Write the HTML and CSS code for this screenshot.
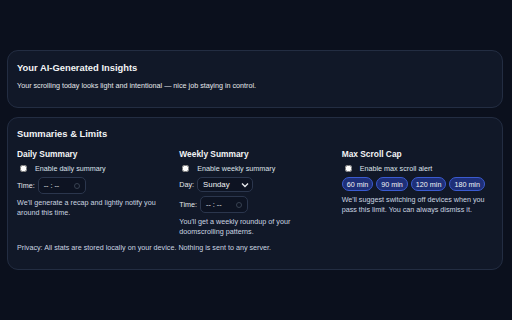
FILE: index.html
```html
<!doctype html>
<html>
<head>
    <meta charset="utf-8">
    <title>Insights</title>
    <link rel="stylesheet" href="styles.css">
</head>
<body>
    <main class="page">
        <section class="card insights">
            <h2>Your AI-Generated Insights</h2>
            <p class="insight-text">Your scrolling today looks light and intentional — nice job staying in control.</p>
        </section>

        <section class="card limits">
            <h2>Summaries &amp; Limits</h2>
            <div class="columns">
                <div class="col">
                    <h3>Daily Summary</h3>
                    <label class="check"><input type="checkbox"> Enable daily summary</label>
                    <div class="field">
                        <span>Time:</span>
                        <div class="time-input"><span>-- : --</span><span class="clock"></span></div>
                    </div>
                    <p class="hint">We'll generate a recap and lightly notify you around this time.</p>
                </div>
                <div class="col">
                    <h3>Weekly Summary</h3>
                    <label class="check"><input type="checkbox"> Enable weekly summary</label>
                    <div class="field">
                        <span>Day:</span>
                        <div class="select">Sunday
                            <svg width="8" height="6" viewBox="0 0 8 6"><path d="M1 1.5 L4 4.5 L7 1.5" fill="none" stroke="#e5e7eb" stroke-width="1.4"/></svg>
                        </div>
                    </div>
                    <div class="field">
                        <span>Time:</span>
                        <div class="time-input"><span>-- : --</span><span class="clock"></span></div>
                    </div>
                    <p class="hint">You'll get a weekly roundup of your doomscrolling patterns.</p>
                </div>
                <div class="col">
                    <h3>Max Scroll Cap</h3>
                    <label class="check"><input type="checkbox"> Enable max scroll alert</label>
                    <div class="chips">
                        <span class="chip">60 min</span>
                        <span class="chip">90 min</span>
                        <span class="chip">120 min</span>
                        <span class="chip">180 min</span>
                    </div>
                    <p class="hint">We'll suggest switching off devices when you pass this limit. You can always dismiss it.</p>
                </div>
            </div>
            <p class="privacy">Privacy: All stats are stored locally on your device. Nothing is sent to any server.</p>
        </section>
    </main>
</body>
</html>
```

FILE: styles.css
```css
* {
    box-sizing: border-box;
}
html, body {
    margin: 0;
    height: 100%;
    overflow: hidden;
}
body {
    background: #0b101d;
    color: #e5e7eb;
    font-family: "Liberation Sans", Arial, sans-serif;
    font-size: 7.2px;
}
.page {
    display: flex;
    flex-direction: column;
    gap: 9px;
    padding: 50px 9px 0 7px;
}
.card {
    background: #111828;
    border: 1px solid #232d42;
    border-radius: 11px;
    padding: 10px 10px 11px 9px;
}
h2 {
    margin: 0;
    font-size: 9.4px;
    font-weight: 700;
    color: #f3f4f6;
}
h3 {
    margin: 0;
    font-size: 8.4px;
    font-weight: 700;
    color: #f3f4f6;
}
.insights {
    height: 58px;
    padding-top: 11px;
}
.insight-text {
    margin: 8px 0 0 0;
    color: #e5e7eb;
}
.limits h2 {
    margin-bottom: 10px;
}
.columns {
    display: grid;
    grid-template-columns: repeat(3, minmax(0, 1fr));
    gap: 12px;
}
.col {
    display: flex;
    flex-direction: column;
    align-items: flex-start;
}
.check {
    display: flex;
    align-items: center;
    gap: 8px;
    margin: 5px 0 4px 3px;
    color: #dde2ea;
}
.check input {
    margin: 0;
    width: 7px;
    height: 7px;
}
.field {
    display: flex;
    align-items: center;
    gap: 3px;
    margin-bottom: 4px;
    color: #e5e7eb;
}
.time-input {
    display: flex;
    align-items: center;
    justify-content: space-between;
    width: 48px;
    height: 17px;
    padding: 0 5px;
    border: 1px solid #2b364d;
    border-radius: 5px;
    background: #0d1322;
    color: #e5e7eb;
}
.clock {
    width: 6px;
    height: 6px;
    border: 1px solid #374151;
    border-radius: 50%;
}
.select {
    display: flex;
    align-items: center;
    justify-content: space-between;
    width: 56px;
    height: 15px;
    padding: 0 3px 0 5px;
    border: 1px solid #2b364d;
    border-radius: 5px;
    background: #0d1322;
    color: #f3f4f6;
    font-size: 7.8px;
}
.chips {
    display: flex;
    gap: 3px;
    margin-bottom: 4px;
}
.chip {
    display: flex;
    align-items: center;
    height: 14px;
    padding: 0 4px;
    white-space: nowrap;
    border: 1px solid #3b5bd0;
    border-radius: 7px;
    background: #1e2f78;
    color: #f3f4f6;
}
.hint {
    margin: 0;
    line-height: 10px;
    color: #cbd5e1;
}
.privacy {
    margin: 6px 0 6px 0;
    color: #cbd5e1;
}
```
